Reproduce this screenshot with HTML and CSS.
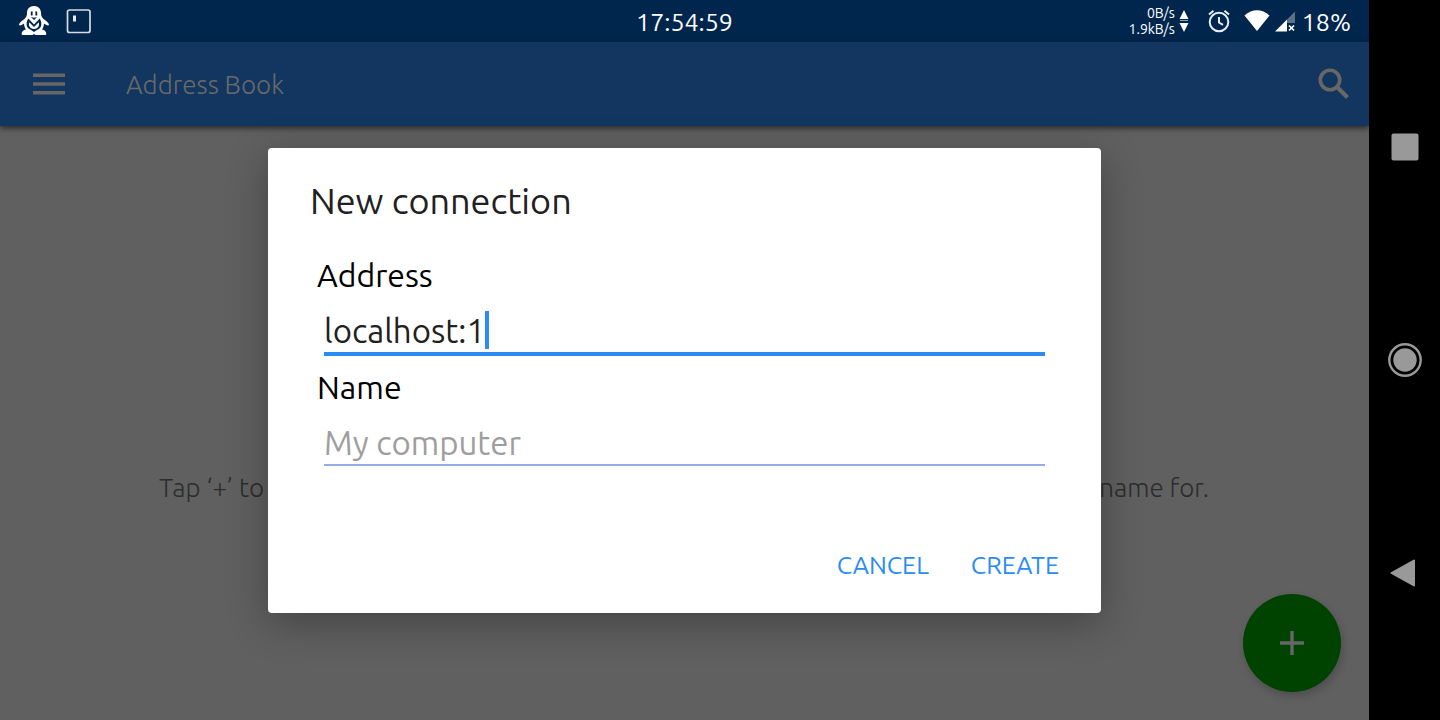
FILE: index.html
```html
<!DOCTYPE html>
<html lang="en">
<head>
<meta charset="utf-8">
<meta name="viewport" content="width=device-width, initial-scale=1">
<title>Address Book</title>
<link rel="stylesheet" href="styles.css">
</head>
<body>
<div class="device">
  <div class="screen">
    <div class="status">
      <div class="status-group">
        <svg class="penguin" width="32" height="30" viewBox="0 0 32 30" aria-hidden="true">
          <path fill="#fff" d="M16 0c-4.500 0-7 3-7 7 0 2.500-.6 4-2.500 6C3.500 15 1 17 1 19c1 1 3 0 5-1.500 0 2 .8 4.500 2 6-3 .8-5 2.500-4 5.500h10.500l1.500-1 1.500 1H28c1-3-1-4.700-4-5.500 1.200-1.500 2-4 2-6 2 1.500 4 2.500 5 1.500 0-2-2.500-4-5.500-6C23.600 11 23 9.500 23 7c0-4-2.500-7-7-7z"/>
          <path fill="#00264d" d="M10.300 12.500L16 18.500l5.700-6c2 3 2.300 7 .3 9.500-1.500 1.500-3.500 2-6 4-2.500-2-4.500-2.500-6-4-2-2.500-1.700-6.500.3-9.500z"/>
          <path fill="#fff" d="M11.200 16.200L16 21l4.800-4.800c.8 3.300-.3 6.300-4.800 6.800-4.500-.5-5.600-3.500-4.800-6.800z"/>
          <path fill="#00264d" d="M12.800 5.500h1.800v4h-1.800zM17.400 5.500h1.800v4h-1.800zM13 11l3 .8 3-.8-3 3z"/>
        </svg>
        <svg width="26" height="26" viewBox="0 0 26 26" aria-hidden="true">
          <rect x="1.500" y="2" width="22.500" height="22.500" rx="2" fill="none" stroke="#d5dce4" stroke-width="1.700"/>
          <rect x="7" y="7.500" width="3" height="6" fill="#e5e9ee"/>
        </svg>
      </div>
      <time class="clock">17:54:59</time>
      <div class="status-group status-right">
        <div class="speed"><span>0B/s</span><span>1.9kB/s</span></div>
        <svg class="arrows" width="10" height="22" viewBox="0 0 10 22" aria-hidden="true"><path fill="#fff" d="M5 0l4.500 9h-9zM5 22l4.500-9h-9z"/><path fill="#98a8b8" d="M1 10h8v1H1z"/></svg>
        <svg class="alarm" width="24" height="24" viewBox="0 0 24 24" aria-hidden="true" fill="none" stroke="#e8edf2" stroke-width="2"><circle cx="12" cy="13" r="9.300"/><path d="M12 8v5.500l4 2.300M2 5.500L6.500 1.700M22 5.500l-4.500-3.800"/></svg>
        <svg class="wifi" width="26" height="22" viewBox="0 0 26 22" aria-hidden="true"><path fill="#fff" d="M.5 5.500C8-1.500 18-1.500 25.500 5.500L13 21z"/></svg>
        <svg class="signal" width="21" height="21" viewBox="0 0 21 21" aria-hidden="true"><path fill="#fff" d="M0 20.500L12 8.500v12z"/><path fill="#5c7186" d="M12 8.500l8-8V12h-8z"/><path stroke="#fff" stroke-width="1.700" d="M14 14.500l5 5M19 14.500l-5 5"/></svg>
        <span class="battery">18%</span>
      </div>
    </div>
    <div class="app">
      <header class="toolbar">
        <button class="icon-button" type="button" aria-label="Menu">
          <svg width="32" height="24" viewBox="0 0 32 24" aria-hidden="true"><path fill="#676767" d="M0 1.500h32V5H0zM0 10.200h32v3.600H0zM0 19h32v3.500H0z"/></svg>
        </button>
        <h1 class="app-title">Address Book</h1>
        <button class="icon-button" type="button" aria-label="Search">
          <svg width="32" height="32" viewBox="0 0 32 32" aria-hidden="true" fill="none" stroke="#696763"><circle cx="12" cy="12" r="9.700" stroke-width="3.600"/><path stroke-width="4.200" d="M19.500 19.500L29.500 29.500"/></svg>
        </button>
      </header>
      <main class="content">
        <p class="hint"><span>Tap ‘+’ to</span><span>name for.</span></p>
        <button class="fab" type="button" aria-label="Add connection">
          <svg width="24" height="24" viewBox="0 0 24 24" aria-hidden="true"><path fill="#666" d="M10.300 0h3.400v10.300H24v3.400H13.700V24h-3.400V13.700H0v-3.400h10.300z"/></svg>
        </button>
      </main>
      <div class="overlay">
        <form class="dialog" role="dialog" aria-labelledby="dialog-title">
          <h2 class="dialog-title" id="dialog-title">New connection</h2>
          <div class="fields">
            <label class="label" for="address">Address</label>
            <div class="field field-active">
              <input class="input" id="address" type="text" value="localhost:1">
              <span class="caret"></span>
            </div>
            <label class="label" for="name">Name</label>
            <div class="field">
              <input class="input input-wide" id="name" type="text" placeholder="My computer">
            </div>
          </div>
          <div class="actions">
            <button class="action" type="button">CANCEL</button>
            <button class="action" type="button">CREATE</button>
          </div>
        </form>
      </div>
    </div>
  </div>
  <nav class="navbar" aria-label="System">
    <button class="nav-button" type="button" aria-label="Recent apps"><svg width="36" height="36" viewBox="0 0 36 36" aria-hidden="true"><rect x="4.500" y="4.500" width="27" height="27" rx="2" fill="#999"/></svg></button>
    <button class="nav-button" type="button" aria-label="Home"><svg width="36" height="36" viewBox="0 0 36 36" aria-hidden="true"><circle cx="18" cy="18" r="15.700" fill="none" stroke="#999" stroke-width="2.400"/><circle cx="18" cy="18" r="11.700" fill="#999"/></svg></button>
    <button class="nav-button" type="button" aria-label="Back"><svg width="36" height="36" viewBox="0 0 36 36" aria-hidden="true"><path d="M4.500 18L27 5.500v25z" fill="#999" stroke="#999" stroke-width="2" stroke-linejoin="round"/></svg></button>
  </nav>
</div>
</body>
</html>
```
FILE: styles.css
```css
* { box-sizing: border-box; }
body {
  margin: 0;
  font-family: Ubuntu, "Noto Sans", "Open Sans", sans-serif;
  background: #000;
}
button { border: 0; padding: 0; background: none; font: inherit; color: inherit; cursor: pointer; }
svg { display: block; }
h1, h2, p { margin: 0; font-weight: 400; }

.device { display: flex; min-height: 100vh; }
.screen { flex: 1; display: flex; flex-direction: column; min-width: 0; }

.status {
  display: grid;
  grid-template-columns: 1fr auto 1fr;
  align-items: center;
  height: 42px;
  padding: 0 18px;
  background: #00264d;
  color: #fff;
}
.status-group { display: flex; align-items: center; gap: 16px; }
.status-right { justify-content: flex-end; gap: 0; }
.clock, .battery { font-size: 25px; line-height: 40px; padding-top: 2px; }
.speed {
  display: flex;
  flex-direction: column;
  align-items: flex-end;
  font-size: 14px;
  line-height: 16px;
}
.arrows { margin-left: 4px; margin-right: 18px; }
.alarm { margin-right: 13px; }
.wifi { margin-right: 5px; }
.signal { margin-right: 6px; }

.app { flex: 1; display: flex; flex-direction: column; position: relative; }
.toolbar {
  display: flex;
  align-items: center;
  height: 84px;
  padding: 0 19px 0 33px;
  background: #123660;
  box-shadow: 0 2px 6px rgba(0, 0, 0, .6);
  z-index: 1;
}
.app-title {
  flex: 1;
  margin-left: 61px;
  padding-top: 2px;
  font-size: 26px;
  font-weight: 300;
  line-height: 32px;
  color: #6a6a6a;
}

.content { flex: 1; display: grid; background: #606060; position: relative; }
.hint {
  align-self: center;
  display: flex;
  justify-content: space-between;
  padding: 130px 160px 0 159px;
  font-size: 26px;
  font-weight: 300;
  line-height: 32px;
  color: #2c2c2c;
}
.fab {
  position: absolute;
  right: 28px;
  bottom: 28px;
  display: grid;
  place-items: center;
  width: 98px;
  height: 98px;
  border-radius: 50%;
  background: #004200;
  box-shadow: 2px 4px 8px rgba(0, 0, 0, .2);
}

.overlay { position: absolute; inset: 0; z-index: 2; display: grid; place-items: center; padding-bottom: 1px; }
.dialog {
  width: min(833px, 90%);
  padding: 30px 42px 26px;
  border-radius: 4px;
  background: #fff;
  box-shadow: 0 10px 40px rgba(0, 0, 0, .3);
}
.dialog-title { font-size: 36px; line-height: 46px; color: #212121; }
.fields { padding: 20px 14px 0; }
.label {
  display: block;
  margin-left: -7px;
  padding: 10px 0 2px;
  font-size: 32px;
  line-height: 42px;
  color: #000;
}
.field {
  display: flex;
  align-items: center;
  height: 56px;
  padding-top: 10px;
  border-bottom: 2px solid #93ade6;
}
.field-active { height: 58px; border-bottom: 4px solid #2a8cf5; }
.input {
  field-sizing: content;
  border: 0;
  padding: 2px 0 0;
  outline: 0;
  background: none;
  font: inherit;
  font-size: 33px;
  line-height: 40px;
  color: #212121;
}
.input-wide { flex: 1; }
.input::placeholder { color: #9e9e9e; opacity: 1; }
.caret { width: 4px; height: 38px; background: #2a8cf5; }
.actions { display: flex; justify-content: flex-end; gap: 42px; padding-top: 77px; }
.action { font-size: 25px; line-height: 44px; color: #2a8cf5; }

.navbar {
  width: 71px;
  display: flex;
  flex-direction: column;
  justify-content: space-around;
  align-items: center;
  padding: 40px 0;
  background: #000;
}
```
